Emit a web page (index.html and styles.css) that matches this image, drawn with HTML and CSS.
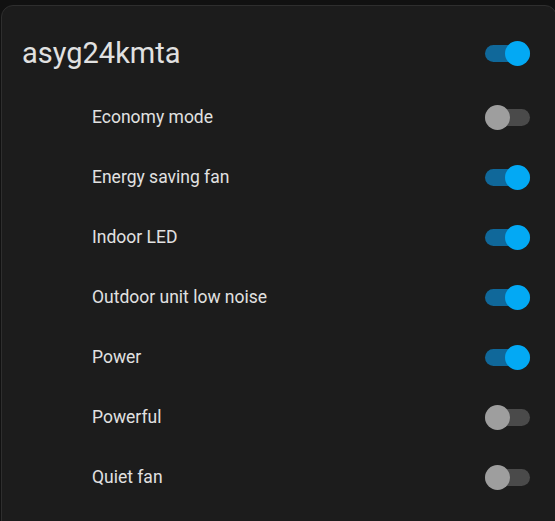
FILE: index.html
```html
<!DOCTYPE html>
<html lang="en">
<head>
  <meta charset="UTF-8" />
  <title>asyg24kmta</title>
  <link rel="stylesheet" href="styles.css">
</head>
<body>

<div class="card">
  <div class="card-header">
    <span class="title">asyg24kmta</span>
    <span class="toggle on"><span class="thumb"></span></span>
  </div>

  <div class="rows">
    <div class="row">
      <span class="name">Economy mode</span>
      <span class="toggle"><span class="thumb"></span></span>
    </div>
    <div class="row">
      <span class="name">Energy saving fan</span>
      <span class="toggle on"><span class="thumb"></span></span>
    </div>
    <div class="row">
      <span class="name">Indoor LED</span>
      <span class="toggle on"><span class="thumb"></span></span>
    </div>
    <div class="row">
      <span class="name">Outdoor unit low noise</span>
      <span class="toggle on"><span class="thumb"></span></span>
    </div>
    <div class="row">
      <span class="name">Power</span>
      <span class="toggle on"><span class="thumb"></span></span>
    </div>
    <div class="row">
      <span class="name">Powerful</span>
      <span class="toggle"><span class="thumb"></span></span>
    </div>
    <div class="row">
      <span class="name">Quiet fan</span>
      <span class="toggle"><span class="thumb"></span></span>
    </div>
  </div>
</div>

</body>
</html>
```

FILE: styles.css
```css
html, body {
  margin: 0;
  height: 100%;
  overflow: hidden;
}

body {
  font-family: Roboto, "Noto Sans", sans-serif;
  background: #111111;
  color: #e1e1e1;
}

.card {
  margin: 5px -2px 0 1px;
  background: #1c1c1c;
  border: 1px solid #2e2e2e;
  border-radius: 12px;
  padding: 17px 26px 20px 20px;
  min-height: 100vh;
}

.card-header {
  display: flex;
  align-items: center;
  justify-content: space-between;
  height: 60px;
  margin-bottom: 4px;
}

.title {
  font-size: 29px;
  line-height: 1;
}

.row {
  display: flex;
  align-items: center;
  justify-content: space-between;
  height: 60px;
  padding-left: 70px;
}

.name {
  font-size: 17.5px;
}

.toggle {
  position: relative;
  width: 45px;
  height: 17px;
  border-radius: 9px;
  background: #4a4a4a;
}

.toggle .thumb {
  position: absolute;
  top: -4px;
  left: 0;
  width: 25px;
  height: 25px;
  border-radius: 50%;
  background: #9e9e9e;
}

.toggle.on {
  background: #10689a;
}

.toggle.on .thumb {
  left: 20px;
  background: #03a9f4;
}
```
